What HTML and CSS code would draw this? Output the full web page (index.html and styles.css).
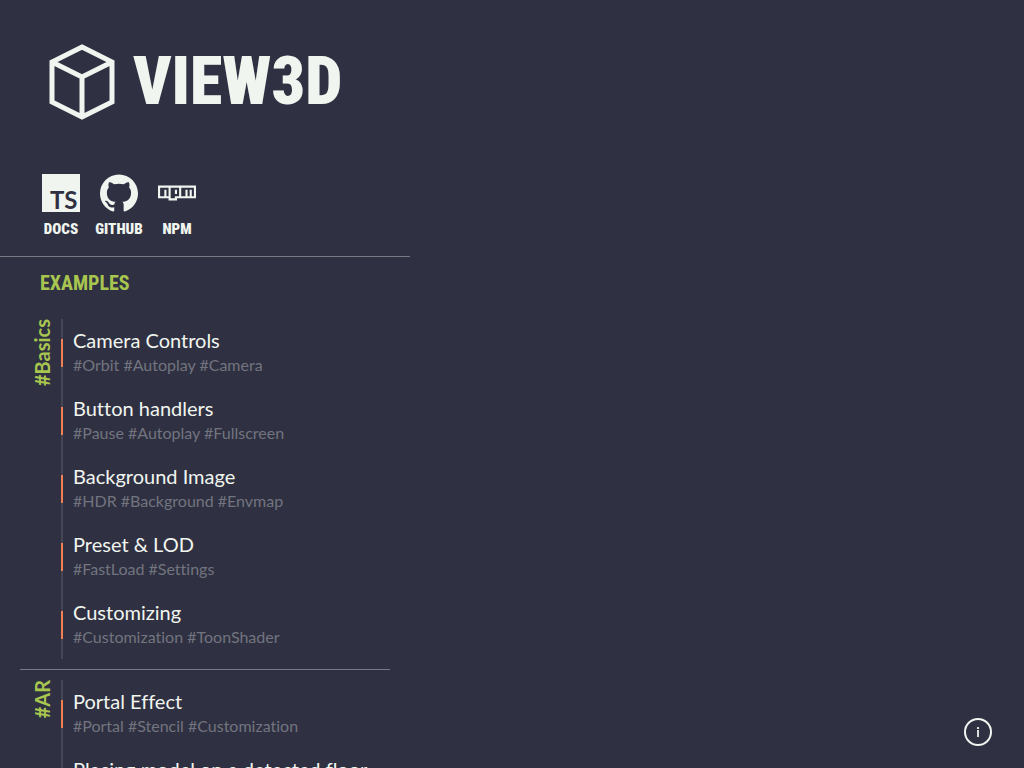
FILE: index.html
```html
<!DOCTYPE html>
<html lang="en">
<head>
<meta charset="utf-8">
<title>View3D</title>
<link rel="stylesheet" href="styles.css">
</head>
<body>
<aside class="sidebar">
  <header class="brand">
    <svg class="brand-cube" viewBox="0 0 66 76" aria-hidden="true"><path d="M33 3 63 18V58L33 73 3 58V18ZM3 18 33 33 63 18M33 33V73"/></svg>
    <h1 class="brand-name">VIEW3D</h1>
  </header>
  <nav class="links">
    <a class="link" href="#docs">
      <svg class="link-icon" viewBox="0 0 38 38" aria-hidden="true"><path d="M0 0H38V38H0Z"/><text class="ts-text" x="8" y="35">TS</text></svg>
      <span>DOCS</span>
    </a>
    <a class="link" href="#github">
      <svg class="link-icon" viewBox="0 0 24 24" aria-hidden="true"><path d="M12 .297c-6.63 0-12 5.373-12 12 0 5.303 3.438 9.8 8.205 11.385.6.113.82-.258.82-.577 0-.285-.01-1.04-.015-2.04-3.338.724-4.042-1.61-4.042-1.61C4.422 18.07 3.633 17.7 3.633 17.7c-1.087-.744.084-.729.084-.729 1.205.084 1.838 1.236 1.838 1.236 1.07 1.835 2.809 1.305 3.495.998.108-.776.417-1.305.76-1.605-2.665-.3-5.466-1.332-5.466-5.93 0-1.31.465-2.38 1.235-3.22-.135-.303-.54-1.523.105-3.176 0 0 1.005-.322 3.3 1.23.96-.267 1.98-.399 3-.405 1.02.006 2.04.138 3 .405 2.28-1.552 3.285-1.23 3.285-1.23.645 1.653.24 2.873.12 3.176.765.84 1.23 1.91 1.23 3.22 0 4.61-2.805 5.625-5.475 5.92.42.36.81 1.096.81 2.22 0 1.606-.015 2.896-.015 3.286 0 .315.21.69.825.57C20.565 22.092 24 17.592 24 12.297c0-6.627-5.373-12-12-12"/></svg>
      <span>GITHUB</span>
    </a>
    <a class="link" href="#npm">
      <svg class="link-icon" viewBox="0 0 24 24" aria-hidden="true"><path d="M0 7.334v8h6.666v1.332H12v-1.332h12v-8H0zm6.666 6.664H5.334v-4H3.999v4H1.335V8.667h5.331v5.331zm4 0v1.336H8.001V8.667h5.334v5.332h-2.669v-.001zm12.001 0h-1.33v-4h-1.336v4h-1.335v-4h-1.33v4h-2.671V8.667h8.002v5.331zM10.665 10H12v2.667h-1.335V10z"/></svg>
      <span>NPM</span>
    </a>
  </nav>
  <main class="examples">
    <h2 class="examples-title">EXAMPLES</h2>
    <section class="group">
      <h3 class="group-name">#Basics</h3>
      <ul class="items">
        <li class="item"><a class="item-link" href="#camera">Camera Controls</a><p class="tags">#Orbit #Autoplay #Camera</p></li>
        <li class="item"><a class="item-link" href="#buttons">Button handlers</a><p class="tags">#Pause #Autoplay #Fullscreen</p></li>
        <li class="item"><a class="item-link" href="#background">Background Image</a><p class="tags">#HDR #Background #Envmap</p></li>
        <li class="item"><a class="item-link" href="#preset">Preset &amp; LOD</a><p class="tags">#FastLoad #Settings</p></li>
        <li class="item"><a class="item-link" href="#customizing">Customizing</a><p class="tags">#Customization #ToonShader</p></li>
      </ul>
    </section>
    <section class="group">
      <h3 class="group-name">#AR</h3>
      <ul class="items">
        <li class="item"><a class="item-link" href="#portal">Portal Effect</a><p class="tags">#Portal #Stencil #Customization</p></li>
        <li class="item"><a class="item-link" href="#floor">Placing model on a detected floor</a></li>
      </ul>
    </section>
  </main>
</aside>
<button class="info" type="button">i</button>
</body>
</html>
```
FILE: styles.css
```css
:root {
  --bg: #2f3142;
  --fg: #f1f5ef;
  --green: #a8c550;
  --orange: #f08050;
  --muted: #72747f;
  --rule: #777985;
  --display: "Roboto Condensed", Roboto, sans-serif;
}
* { box-sizing: border-box; margin: 0; padding: 0; }
body {
  height: 100vh;
  overflow: hidden;
  background: var(--bg);
  color: var(--fg);
  font-family: Lato, "Open Sans", sans-serif;
  font-variant-ligatures: none;
}
a { color: inherit; text-decoration: none; }
.sidebar {
  width: 410px;
  max-width: 100%;
  height: 100%;
  overflow-y: auto;
  scrollbar-width: none;
}
.brand {
  display: flex;
  align-items: center;
  gap: 18px;
  padding: 44px 49px 0;
}
.brand-cube {
  width: 66px;
  height: 76px;
  flex: none;
  fill: none;
  stroke: var(--fg);
  stroke-width: 5;
}
.brand-name {
  font: 900 66px/76px var(--display);
}
.links {
  display: flex;
  gap: 10px;
  padding: 54px 37px 17px;
  border-bottom: 1px solid var(--rule);
}
.link {
  display: flex;
  flex-direction: column;
  align-items: center;
  gap: 7px;
  width: 48px;
  font: 900 15px/20px var(--display);
}
.link-icon {
  width: 38px;
  height: 38px;
  fill: var(--fg);
}
.ts-text {
  font: bold 24px Lato, sans-serif;
  fill: var(--bg);
}
.examples { padding: 10px 20px; }
.examples-title {
  padding: 0 20px;
  color: var(--green);
  font: bold 20px/32px var(--display);
}
.group {
  display: flex;
  gap: 8px;
  padding: 10px 12px;
}
.examples-title + .group { padding-top: 20px; }
.group + .group { border-top: 1px solid var(--rule); }
.group-name {
  align-self: flex-start;
  width: 21px;
  writing-mode: vertical-rl;
  transform: rotate(180deg);
  color: var(--green);
  font-size: 20px;
  line-height: 21px;
}
.items {
  flex: 1;
  list-style: none;
  border-left: 2px solid #454756;
}
.item {
  position: relative;
  min-height: 68px;
  padding: 8px 0 10px 10px;
}
.item::before {
  content: "";
  position: absolute;
  top: 20px;
  left: -2px;
  width: 2px;
  height: 28px;
  background: var(--orange);
}
.item-link {
  display: block;
  font-size: 20px;
  line-height: 26px;
}
.tags {
  color: var(--muted);
  font-size: 16px;
  line-height: 24px;
}
.info {
  position: fixed;
  right: 32px;
  bottom: 22px;
  width: 28px;
  height: 28px;
  border: 2px solid var(--fg);
  border-radius: 50%;
  background: none;
  color: var(--fg);
  font: bold 14px/20px Lato, sans-serif;
}
```
